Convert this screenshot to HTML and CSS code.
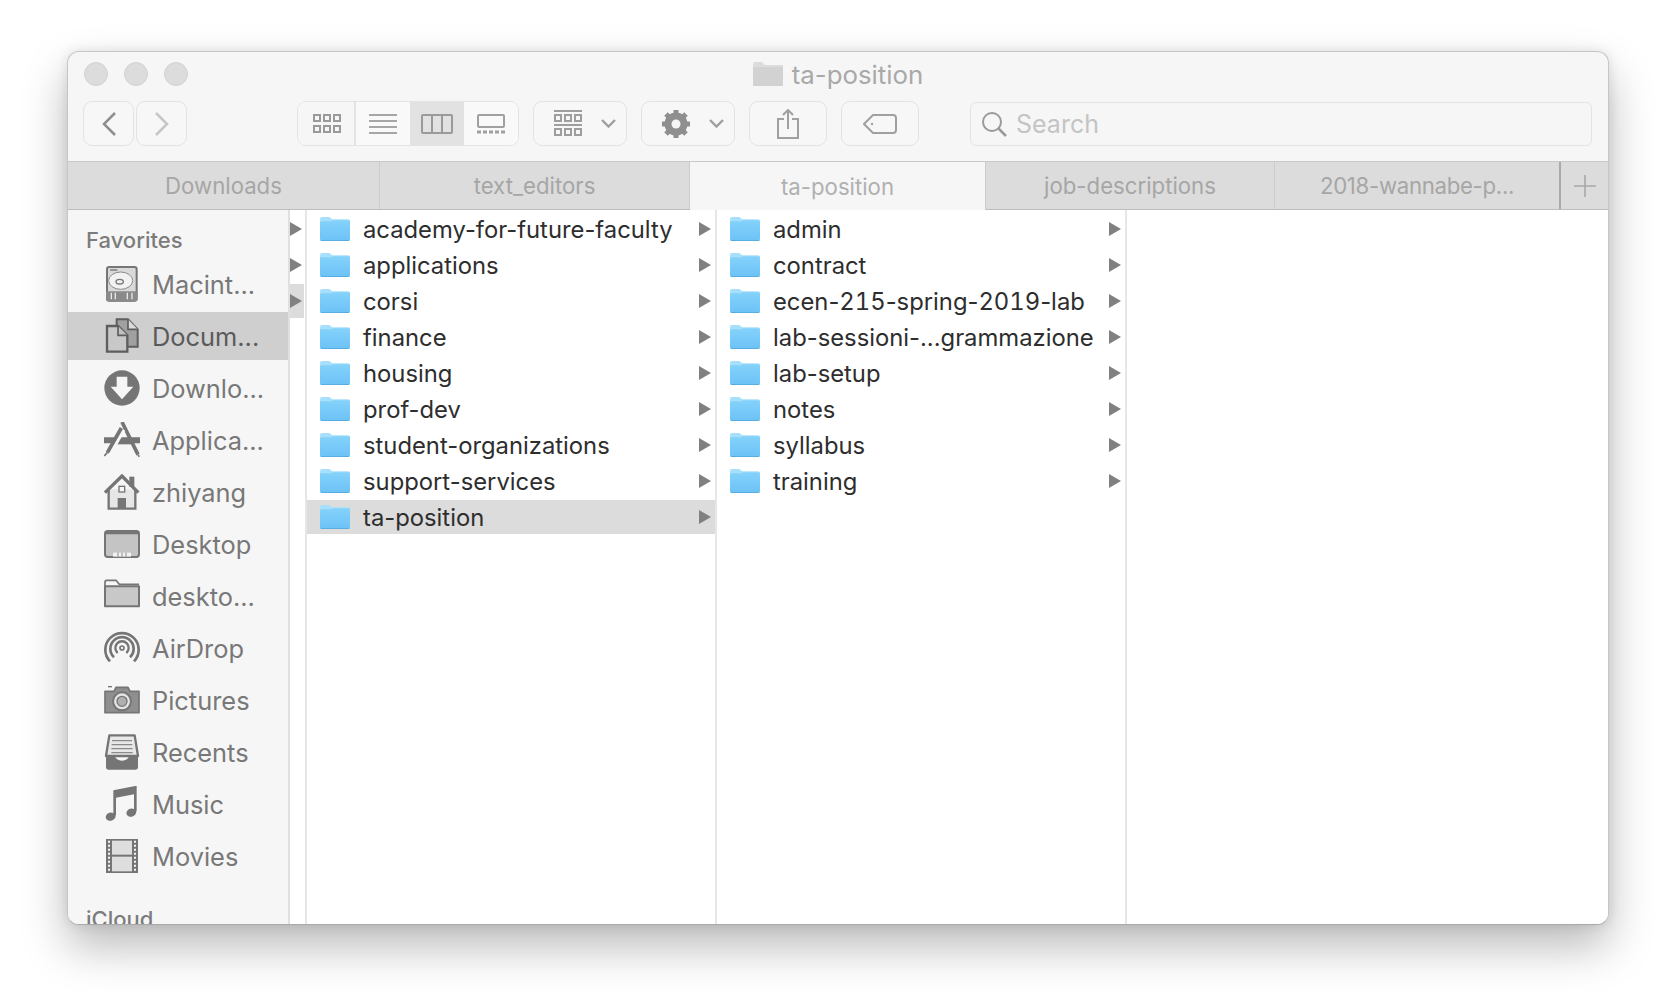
FILE: index.html
```html
<!DOCTYPE html>
<html lang="en">
<head>
    <meta charset="UTF-8">
    <title>ta-position</title>
    <link rel="stylesheet" href="styles.css">
</head>
<body>
    <svg class="icon-defs" xmlns="http://www.w3.org/2000/svg">
        <defs>
            <linearGradient id="folder-grad" x1="0" y1="0" x2="0" y2="1">
                <stop offset="0" stop-color="#84d2fb"/>
                <stop offset="1" stop-color="#6cc2f6"/>
            </linearGradient>
        </defs>
        <symbol id="folder-blue" viewBox="0 0 90 72">
            <path d="M0 6 Q0 0 6 0 H26 Q30 0 33 4 L36 7 H84 Q90 7 90 13 V30 H0Z" fill="#a6e0fc"/>
            <path d="M0 17 Q0 13 4 13 H34 L38 10 H86 Q90 10 90 14 V66 Q90 72 84 72 H6 Q0 72 0 66Z" fill="url(#folder-grad)"/>
            <path d="M0 66 Q0 72 6 72 H84 Q90 72 90 66 V67 Q90 70 84 70 H6 Q0 70 0 67Z" fill="#4fa8dc"/>
        </symbol>
        <symbol id="arrow" viewBox="0 0 12 14"><path d="M0 0 L12 7 L0 14Z" fill="#808080"/></symbol>

        <symbol id="i-drive" viewBox="0 0 108 108">
            <rect x="9" y="3" width="89" height="101" rx="7" fill="#d9d9d9" stroke="#757575" stroke-width="6"/>
            <path d="M6 76 H101 V100 Q101 107 94 107 H13 Q6 107 6 100Z" fill="#8a8a8a"/>
            <path d="M22 80 V100 M34 80 V100 M70 80 V100 M84 80 V100" stroke="#e8e8e8" stroke-width="4"/>
            <ellipse cx="50" cy="44" rx="36" ry="26" fill="#f2f2f2" stroke="#8a8a8a" stroke-width="3"/>
            <ellipse cx="47" cy="47" rx="11" ry="7" fill="none" stroke="#757575" stroke-width="4"/>
            <path d="M18 12 H40" stroke="#757575" stroke-width="4"/>
        </symbol>
        <symbol id="i-docs" viewBox="0 0 108 108">
            <path d="M38 4 H72 L101 34 V86 H38Z" fill="#a0a0a0" stroke="#5e5e5e" stroke-width="6"/>
            <path d="M72 4 V34 H101" fill="#dcdcdc" stroke="#5e5e5e" stroke-width="5"/>
            <path d="M9 24 H42 L70 52 V101 H9Z" fill="#c8c8c8" stroke="#5e5e5e" stroke-width="7"/>
            <path d="M42 24 V52 H70" fill="#c0c0c0" stroke="#5e5e5e" stroke-width="5"/>
        </symbol>
        <symbol id="i-down" viewBox="0 0 108 108">
            <circle cx="54" cy="54" r="53" fill="#757575"/>
            <path d="M38 20 H70 V50 H88 L54 88 L20 50 H38Z" fill="#f6f6f6"/>
        </symbol>
        <symbol id="i-apps" viewBox="0 0 108 108">
            <path d="M0 46 H108 V64 H0Z" fill="#757575"/>
            <path d="M26 64 H82" stroke="#757575" stroke-width="6"/>
            <path d="M54 0 L102 98" stroke="#757575" stroke-width="11" fill="none"/>
            <path d="M56 22 L16 92" stroke="#f6f6f6" stroke-width="18"/>
            <path d="M52 18 L10 92" stroke="#757575" stroke-width="11"/>
            <path d="M10 92 L1 102" stroke="#757575" stroke-width="5"/>
            <path d="M102 98 L106 104" stroke="#757575" stroke-width="5"/>
        </symbol>
        <symbol id="i-home" viewBox="0 0 108 108">
            <path d="M14 46 V104 H94 V46" fill="#e6e6e6" stroke="#757575" stroke-width="7"/>
            <path d="M3 56 L54 6 L103 56" fill="none" stroke="#757575" stroke-width="10"/>
            <rect x="76" y="8" width="15" height="30" fill="#757575"/>
            <rect x="41" y="72" width="25" height="32" fill="#757575"/>
            <rect x="45" y="37" width="17" height="17" fill="#f6f6f6" stroke="#757575" stroke-width="4"/>
        </symbol>
        <symbol id="i-desk" viewBox="0 0 108 108">
            <rect x="3" y="15" width="102" height="78" rx="8" fill="#c4c4c4" stroke="#757575" stroke-width="6"/>
            <path d="M3 25 V23 Q3 15 11 15 H97 Q105 15 105 23 V25Z" fill="#757575"/>
            <path d="M27 92 V80 H81 V92Z" fill="#f2f2f2"/>
            <path d="M42 80 V92 M54 80 V92 M66 80 V92" stroke="#8a8a8a" stroke-width="3"/>
        </symbol>
        <symbol id="i-folder" viewBox="0 0 108 108">
            <path d="M3 30 V12 Q3 7 8 7 H36 L46 19 H105" fill="none" stroke="#757575" stroke-width="5"/>
            <path d="M3 25 H105 V85 H3Z" fill="#c8c8c8" stroke="#757575" stroke-width="6" stroke-linejoin="round"/>
        </symbol>
        <symbol id="i-air" viewBox="0 0 108 108" fill="none" stroke="#757575">
            <path d="M18 94 A50 50 0 1 1 90 94" stroke-width="8"/>
            <path d="M30 82 A35 35 0 1 1 78 82" stroke-width="8"/>
            <path d="M41 69 A20 20 0 1 1 67 69" stroke-width="7"/>
            <circle cx="54" cy="54" r="6" stroke-width="5"/>
        </symbol>
        <symbol id="i-cam" viewBox="0 0 108 108">
            <path d="M3 28 H30 L36 16 H72 L78 28 H105 V92 H3Z" fill="#8f8f8f" stroke="#757575" stroke-width="5" stroke-linejoin="round"/>
            <circle cx="54" cy="58" r="27" fill="#e4e4e4" stroke="#757575" stroke-width="6"/>
            <circle cx="54" cy="58" r="15" fill="#b0b0b0" stroke="#757575" stroke-width="4"/>
            <path d="M12 14 H24" stroke="#757575" stroke-width="4"/>
        </symbol>
        <symbol id="i-recents" viewBox="0 0 108 108">
            <path d="M16 4 H92 L102 66 H6Z" fill="#e8e8e8" stroke="#757575" stroke-width="7" stroke-linejoin="round"/>
            <path d="M24 20 H84 M23 32 H85 M22 44 H86 M22 56 H86" stroke="#8a8a8a" stroke-width="4"/>
            <path d="M6 64 H32 Q36 80 54 80 Q72 80 76 64 H102 V100 Q102 107 95 107 H13 Q6 107 6 100Z" fill="#757575"/>
        </symbol>
        <symbol id="i-music" viewBox="0 0 108 108">
            <path d="M32 88 V16 L94 4 V76" fill="none" stroke="#757575" stroke-width="8"/>
            <path d="M32 14 L94 2 V24 L32 36Z" fill="#757575"/>
            <ellipse cx="20" cy="92" rx="15" ry="12" fill="#757575" transform="rotate(-18 20 92)"/>
            <ellipse cx="82" cy="80" rx="15" ry="12" fill="#757575" transform="rotate(-18 82 80)"/>
        </symbol>
        <symbol id="i-movies" viewBox="0 0 108 108">
            <rect x="6" y="3" width="96" height="102" fill="#757575"/>
            <rect x="24" y="8" width="60" height="42" fill="#dedede"/>
            <rect x="24" y="56" width="60" height="44" fill="#dedede"/>
            <path d="M15 8 V102 M93 8 V102" stroke="#f6f6f6" stroke-width="6" stroke-dasharray="6 6"/>
        </symbol>
    </svg>

    <div class="window">
        <div class="titlebar">
            <div class="lights">
                <span class="light"></span>
                <span class="light"></span>
                <span class="light"></span>
            </div>
            <div class="title">
                <svg width="30" height="24" viewBox="0 0 30 24">
                    <path d="M0 2 Q0 0 2 0 H9 L12 3 H30 V24 H0Z" fill="#dcdcdc"/>
                    <path d="M0 5 H30 V24 H0Z" fill="#d2d2d2"/>
                </svg>
                <span>ta-position</span>
            </div>
            <div></div>
        </div>

        <div class="toolbar">
            <div class="nav">
                <div class="btn nav-btn">
                    <svg width="16" height="26" viewBox="0 0 16 26"><path d="M14 2 L3 13 L14 24" fill="none" stroke="#8e8e8e" stroke-width="2.5"/></svg>
                </div>
                <div class="btn nav-btn">
                    <svg width="16" height="26" viewBox="0 0 16 26"><path d="M2 2 L13 13 L2 24" fill="none" stroke="#c6c6c6" stroke-width="2.5"/></svg>
                </div>
            </div>
            <div class="btn views">
                <div class="view view-first">
                    <svg width="28" height="20" viewBox="0 0 28 20" fill="none" stroke="#9a9a9a" stroke-width="2">
                        <rect x="1" y="1" width="6" height="6"/><rect x="11" y="1" width="6" height="6"/><rect x="21" y="1" width="6" height="6"/>
                        <rect x="1" y="12" width="6" height="6"/><rect x="11" y="12" width="6" height="6"/><rect x="21" y="12" width="6" height="6"/>
                    </svg>
                </div>
                <div class="view">
                    <svg width="28" height="20" viewBox="0 0 28 20" stroke="#a6a6a6" stroke-width="2">
                        <path d="M0 1 H28 M0 7 H28 M0 13 H28 M0 19 H28"/>
                    </svg>
                </div>
                <div class="view view-on">
                    <svg width="32" height="20" viewBox="0 0 32 20" fill="none" stroke="#9a9a9a" stroke-width="2">
                        <rect x="1" y="1" width="30" height="18" rx="1"/><path d="M11 1 V19 M21 1 V19"/>
                    </svg>
                </div>
                <div class="view">
                    <svg width="28" height="20" viewBox="0 0 28 20">
                        <rect x="1" y="1" width="26" height="12" rx="1" fill="none" stroke="#a0a0a0" stroke-width="2"/>
                        <path d="M0 18 H28" stroke="#a0a0a0" stroke-width="3" stroke-dasharray="4 2"/>
                    </svg>
                </div>
            </div>
            <div class="btn action">
                <svg width="28" height="27" viewBox="0 0 28 27" fill="none" stroke="#9e9e9e">
                    <path d="M0 1 H28 M0 15 H28" stroke-width="2"/>
                    <g stroke-width="2">
                        <rect x="1" y="5" width="6" height="6"/><rect x="11" y="5" width="6" height="6"/><rect x="21" y="5" width="6" height="6"/>
                        <rect x="1" y="19" width="6" height="6"/><rect x="11" y="19" width="6" height="6"/><rect x="21" y="19" width="6" height="6"/>
                    </g>
                </svg>
                <svg class="caret" width="15" height="9" viewBox="0 0 15 9"><path d="M1 1 L7.5 7.5 L14 1" fill="none" stroke="#9e9e9e" stroke-width="2.4"/></svg>
            </div>
            <div class="btn action">
                <svg width="28" height="28" viewBox="0 0 28 28">
                    <circle cx="14" cy="14" r="8.5" fill="none" stroke="#8f8f8f" stroke-width="6"/>
                    <path d="M14 0 V28 M0 14 H28 M4 4 L24 24 M24 4 L4 24" stroke="#8f8f8f" stroke-width="5"/>
                    <circle cx="14" cy="14" r="4.5" fill="#f6f6f6"/>
                </svg>
                <svg class="caret" width="15" height="9" viewBox="0 0 15 9"><path d="M1 1 L7.5 7.5 L14 1" fill="none" stroke="#9e9e9e" stroke-width="2.4"/></svg>
            </div>
            <div class="btn share">
                <svg width="22" height="30" viewBox="0 0 22 30" fill="none" stroke="#a0a0a0" stroke-width="2">
                    <path d="M7 10 H1 V29 H21 V10 H15"/><path d="M11 20 V1 M6 6 L11 1 L16 6"/>
                </svg>
            </div>
            <div class="btn share">
                <svg width="34" height="20" viewBox="0 0 34 20" fill="none" stroke="#a0a0a0" stroke-width="2">
                    <path d="M10 1 H30 Q33 1 33 4 V16 Q33 19 30 19 H10 L1 10Z"/><circle cx="9" cy="10" r="1.2" fill="#a0a0a0" stroke="none"/>
                </svg>
            </div>
            <div class="search">
                <svg width="26" height="26" viewBox="0 0 26 26" fill="none" stroke="#9a9a9a" stroke-width="2">
                    <circle cx="11" cy="11" r="9"/><path d="M17.5 17.5 L25 25" stroke-width="2.5"/>
                </svg>
                <span>Search</span>
            </div>
        </div>

        <div class="tabs">
            <div class="tab tab-a">Downloads</div>
            <div class="tab tab-b">text_editors</div>
            <div class="tab tab-c tab-on">ta-position</div>
            <div class="tab tab-d">job-descriptions</div>
            <div class="tab tab-e">2018-wannabe-p...</div>
            <div class="tab-add">
                <svg width="22" height="22" viewBox="0 0 22 22"><path d="M11 0 V22 M0 11 H22" stroke="#a8a8a8" stroke-width="1.6"/></svg>
            </div>
        </div>

        <div class="main">
            <div class="sidebar">
                <div class="side-head">Favorites</div>
                <div class="side-row"><svg class="side-icon"><use href="#i-drive"/></svg><span>Macint...</span></div>
                <div class="side-row side-on"><svg class="side-icon"><use href="#i-docs"/></svg><span>Docum...</span></div>
                <div class="side-row"><svg class="side-icon"><use href="#i-down"/></svg><span>Downlo...</span></div>
                <div class="side-row"><svg class="side-icon"><use href="#i-apps"/></svg><span>Applica...</span></div>
                <div class="side-row"><svg class="side-icon"><use href="#i-home"/></svg><span>zhiyang</span></div>
                <div class="side-row"><svg class="side-icon"><use href="#i-desk"/></svg><span>Desktop</span></div>
                <div class="side-row"><svg class="side-icon"><use href="#i-folder"/></svg><span>deskto...</span></div>
                <div class="side-row"><svg class="side-icon"><use href="#i-air"/></svg><span>AirDrop</span></div>
                <div class="side-row"><svg class="side-icon"><use href="#i-cam"/></svg><span>Pictures</span></div>
                <div class="side-row"><svg class="side-icon"><use href="#i-recents"/></svg><span>Recents</span></div>
                <div class="side-row"><svg class="side-icon"><use href="#i-music"/></svg><span>Music</span></div>
                <div class="side-row"><svg class="side-icon"><use href="#i-movies"/></svg><span>Movies</span></div>
                <div class="side-head side-head-2">iCloud</div>
            </div>

            <div class="col-tail">
                <div class="tail-row"><svg class="arrow"><use href="#arrow"/></svg></div>
                <div class="tail-row"><svg class="arrow"><use href="#arrow"/></svg></div>
                <div class="tail-row tail-on"><svg class="arrow"><use href="#arrow"/></svg></div>
            </div>

            <div class="col">
                <div class="row"><svg class="folder"><use href="#folder-blue"/></svg><span class="name">academy-for-future-faculty</span><svg class="arrow"><use href="#arrow"/></svg></div>
                <div class="row"><svg class="folder"><use href="#folder-blue"/></svg><span class="name">applications</span><svg class="arrow"><use href="#arrow"/></svg></div>
                <div class="row"><svg class="folder"><use href="#folder-blue"/></svg><span class="name">corsi</span><svg class="arrow"><use href="#arrow"/></svg></div>
                <div class="row"><svg class="folder"><use href="#folder-blue"/></svg><span class="name">finance</span><svg class="arrow"><use href="#arrow"/></svg></div>
                <div class="row"><svg class="folder"><use href="#folder-blue"/></svg><span class="name">housing</span><svg class="arrow"><use href="#arrow"/></svg></div>
                <div class="row"><svg class="folder"><use href="#folder-blue"/></svg><span class="name">prof-dev</span><svg class="arrow"><use href="#arrow"/></svg></div>
                <div class="row"><svg class="folder"><use href="#folder-blue"/></svg><span class="name">student-organizations</span><svg class="arrow"><use href="#arrow"/></svg></div>
                <div class="row"><svg class="folder"><use href="#folder-blue"/></svg><span class="name">support-services</span><svg class="arrow"><use href="#arrow"/></svg></div>
                <div class="row row-on"><svg class="folder"><use href="#folder-blue"/></svg><span class="name">ta-position</span><svg class="arrow"><use href="#arrow"/></svg></div>
            </div>

            <div class="col">
                <div class="row"><svg class="folder"><use href="#folder-blue"/></svg><span class="name">admin</span><svg class="arrow"><use href="#arrow"/></svg></div>
                <div class="row"><svg class="folder"><use href="#folder-blue"/></svg><span class="name">contract</span><svg class="arrow"><use href="#arrow"/></svg></div>
                <div class="row"><svg class="folder"><use href="#folder-blue"/></svg><span class="name">ecen-<span class="digits">215</span>-spring-<span class="digits">2019</span>-lab</span><svg class="arrow"><use href="#arrow"/></svg></div>
                <div class="row"><svg class="folder"><use href="#folder-blue"/></svg><span class="name">lab-sessioni-...grammazione</span><svg class="arrow"><use href="#arrow"/></svg></div>
                <div class="row"><svg class="folder"><use href="#folder-blue"/></svg><span class="name">lab-setup</span><svg class="arrow"><use href="#arrow"/></svg></div>
                <div class="row"><svg class="folder"><use href="#folder-blue"/></svg><span class="name">notes</span><svg class="arrow"><use href="#arrow"/></svg></div>
                <div class="row"><svg class="folder"><use href="#folder-blue"/></svg><span class="name">syllabus</span><svg class="arrow"><use href="#arrow"/></svg></div>
                <div class="row"><svg class="folder"><use href="#folder-blue"/></svg><span class="name">training</span><svg class="arrow"><use href="#arrow"/></svg></div>
            </div>

            <div class="col-last"></div>
        </div>
    </div>
</body>
</html>
```

FILE: styles.css
```css
* {
    box-sizing: border-box;
}
html, body {
    margin: 0;
    height: 100%;
    background-color: white;
}
body {
    padding: 51px 0 0 67px;
    font-family: "Inter", "Liberation Sans", sans-serif;
    overflow: hidden;
}
.icon-defs {
    position: absolute;
    width: 0;
    height: 0;
}
.window {
    width: 1542px;
    height: 874px;
    display: flex;
    flex-direction: column;
    background-color: #f6f6f6;
    border: 1px solid #c6c6c6;
    border-bottom-color: #a9a9a9;
    border-radius: 12px;
    overflow: hidden;
    box-shadow: 0 22px 45px rgba(0, 0, 0, 0.27), 0 0 12px rgba(0, 0, 0, 0.1);
}

/* title bar */
.titlebar {
    height: 44px;
    flex: none;
    display: grid;
    grid-template-columns: 1fr auto 1fr;
    align-items: center;
    padding: 0 16px;
}
.lights {
    display: flex;
    gap: 16px;
}
.light {
    width: 24px;
    height: 24px;
    border-radius: 50%;
    background-color: #dcdcdc;
    border: 1px solid #d2d2d2;
}
.title {
    display: flex;
    align-items: center;
    gap: 9px;
    color: #a9a9a9;
    font-size: 25.8px;
}

/* toolbar */
.toolbar {
    height: 65px;
    flex: none;
    display: flex;
    align-items: flex-start;
    padding: 5px 15px 0;
    gap: 14px;
}
.btn {
    height: 45px;
    display: flex;
    align-items: center;
    justify-content: center;
    border: 1px solid #e3e3e3;
    border-radius: 9px;
    background-color: #f7f7f7;
}
.nav {
    display: flex;
    gap: 2px;
    margin-right: 96px;
}
.nav-btn {
    width: 51px;
}
.views {
    width: 222px;
    overflow: hidden;
}
.view {
    flex: 1;
    height: 100%;
    display: flex;
    align-items: center;
    justify-content: center;
    background-color: #f9f9f9;
}
.view-first {
    flex: none;
    width: 58px;
    padding-left: 2px;
    border-right: 2px solid #e3e3e3;
    background-color: #f6f6f6;
}
.view-on {
    background-color: #e2e2e2;
}
.action {
    width: 94px;
    justify-content: flex-start;
    padding-left: 20px;
    gap: 19px;
}
.share {
    width: 78px;
}
.search {
    flex: 1;
    height: 44px;
    margin: 1px 1px 0 37px;
    display: flex;
    align-items: center;
    gap: 9px;
    padding-left: 10px;
    border: 1px solid #e3e3e3;
    border-radius: 6px;
    color: #c4c4c4;
    font-size: 25px;
}

/* tabs */
.tabs {
    height: 49px;
    flex: none;
    display: flex;
    background-color: #dcdcdc;
    border-top: 1px solid #c9c9c9;
    border-bottom: 1px solid #bdbdbd;
    color: #a6a6a6;
    font-size: 22.2px;
}
.tab {
    display: flex;
    align-items: center;
    justify-content: center;
    border-right: 1px solid #cccccc;
}
.tab-a { width: 312px; }
.tab-b { width: 310px; }
.tab-c { width: 296px; }
.tab-d { width: 289px; }
.tab-e { width: 286px; border-right: 2px solid #a9a9a9; letter-spacing: -0.3px; }
.tab-on {
    background-color: #f6f6f6;
    margin-bottom: -1px;
    color: #b0b0b0;
}
.tab-add {
    flex: 1;
    display: flex;
    align-items: center;
    justify-content: center;
}

/* main area */
.main {
    flex: 1;
    min-height: 0;
    display: flex;
    background-color: white;
}
.sidebar {
    width: 222px;
    flex: none;
    overflow: hidden;
    background-color: #f6f6f6;
    border-right: 2px solid #e0e0e0;
}
.side-head {
    height: 50px;
    padding: 17px 0 0 18px;
    color: #7c7c7c;
    font-size: 22px;
    font-weight: 500;
    line-height: 26px;
}
.side-head-2 {
    padding-top: 22px;
}
.side-row {
    height: 48px;
    margin-bottom: 4px;
    display: flex;
    align-items: center;
    padding-left: 36px;
    gap: 12px;
    color: #787878;
    font-size: 25.4px;
    white-space: nowrap;
}
.side-on {
    background-color: #cfcfcf;
    color: #5a5a5a;
}
.side-icon {
    width: 36px;
    height: 36px;
    flex: none;
}
.col-tail {
    width: 17px;
    flex: none;
    padding-top: 2px;
    border-right: 2px solid #e6e6e6;
}
.tail-row {
    height: 34px;
    margin-bottom: 2px;
    width: 14px;
    display: flex;
    align-items: center;
    justify-content: flex-start;
}
.tail-on {
    background-color: #dcdcdc;
}
.col {
    width: 410px;
    flex: none;
    padding: 2px 0 0 0;
    border-right: 2px solid #e6e6e6;
}
.col-last {
    flex: 1;
}
.row {
    height: 34px;
    margin-bottom: 2px;
    display: flex;
    align-items: center;
    padding: 0 4px 0 13px;
    color: #2e2e2e;
    font-size: 23.8px;
    white-space: nowrap;
}
.row-on {
    background-color: #dcdcdc;
}
.folder {
    width: 30px;
    height: 24px;
    flex: none;
    margin-right: 13px;
}
.name {
    flex: 1;
    min-width: 0;
}
.digits {
    font-variant-numeric: tabular-nums;
}
.arrow {
    width: 12px;
    height: 14px;
    flex: none;
}
```
